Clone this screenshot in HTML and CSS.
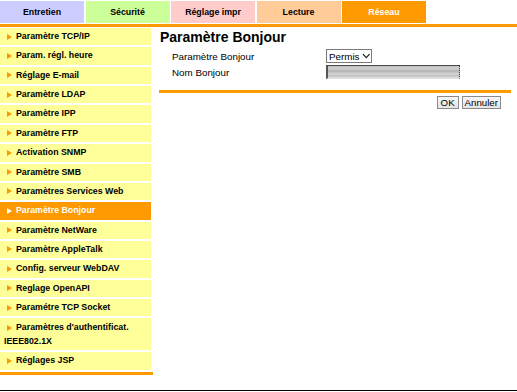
FILE: index.html
```html
<!DOCTYPE html>
<html lang="fr">
<head>
<meta charset="utf-8">
<title>Paramètre Bonjour</title>
<link rel="stylesheet" href="styles.css">
</head>
<body>
<div class="page">
  <nav class="tabs">
    <div class="tab tab-entretien">Entretien</div>
    <div class="tab tab-securite">Sécurité</div>
    <div class="tab tab-reglage">Réglage impr</div>
    <div class="tab tab-lecture">Lecture</div>
    <div class="tab tab-reseau">Réseau</div>
  </nav>
  <div class="tabs-line"></div>
  <div class="main">
    <aside class="sidebar">
      <ul class="menu">
        <li class="item"><span class="arrow"></span>Paramètre TCP/IP</li>
        <li class="item"><span class="arrow"></span>Param. régl. heure</li>
        <li class="item"><span class="arrow"></span>Réglage E-mail</li>
        <li class="item"><span class="arrow"></span>Paramètre LDAP</li>
        <li class="item"><span class="arrow"></span>Paramètre IPP</li>
        <li class="item"><span class="arrow"></span>Paramètre FTP</li>
        <li class="item"><span class="arrow"></span>Activation SNMP</li>
        <li class="item"><span class="arrow"></span>Paramètre SMB</li>
        <li class="item"><span class="arrow"></span>Paramètres Services Web</li>
        <li class="item active"><span class="arrow"></span>Paramètre Bonjour</li>
        <li class="item"><span class="arrow"></span>Paramètre NetWare</li>
        <li class="item"><span class="arrow"></span>Paramètre AppleTalk</li>
        <li class="item"><span class="arrow"></span>Config. serveur WebDAV</li>
        <li class="item"><span class="arrow"></span>Reglage OpenAPI</li>
        <li class="item"><span class="arrow"></span>Paramétre TCP Socket</li>
        <li class="item double"><span class="arrow"></span>Paramètres d'authentificat. IEEE802.1X</li>
        <li class="item"><span class="arrow"></span>Réglages JSP</li>
      </ul>
      <div class="sidebar-line"></div>
    </aside>
    <section class="content">
      <h1 class="title">Paramètre Bonjour</h1>
      <div class="form">
        <div class="row">
          <span class="label">Paramètre Bonjour</span>
          <span class="select">Permis<svg class="chev" width="9" height="6" viewBox="0 0 9 6"><path d="M1 1 L4.5 4.8 L8 1" fill="none" stroke="#222" stroke-width="1.3"/></svg></span>
        </div>
        <div class="row">
          <span class="label">Nom Bonjour</span>
          <span class="textbox"></span>
        </div>
      </div>
      <div class="content-line"></div>
      <div class="buttons">
        <button class="btn btn-ok">OK</button>
        <button class="btn">Annuler</button>
      </div>
    </section>
  </div>
  <div class="bottom-line"></div>
</div>
</body>
</html>
```

FILE: styles.css
```css
* { box-sizing: border-box; }
html, body { margin: 0; padding: 0; background: #fff; }
body {
  font-family: "Liberation Sans", Arial, sans-serif;
  color: #000;
}
.page {
  width: 517px;
  height: 392px;
  display: flex;
  flex-direction: column;
}
.tabs {
  display: flex;
  gap: 1.5px;
  margin-top: 1px;
  height: 22px;
}
.tab {
  width: 84px;
  display: flex;
  align-items: center;
  justify-content: center;
  font-weight: bold;
  font-size: 8.8px;
  color: #000;
}
.tab-entretien { background: #ccccff; }
.tab-securite { background: #ccff99; }
.tab-reglage { background: #ffcccc; }
.tab-lecture { background: #ffcc99; }
.tab-reseau { background: #ff9900; color: #fff; }
.tabs-line {
  height: 3px;
  margin-top: 1px;
  background: #ff9900;
}
.main {
  flex: 1;
  display: flex;
  margin-top: 1px;
}
.sidebar {
  width: 153px;
  display: flex;
  flex-direction: column;
}
.menu {
  list-style: none;
  margin: 0;
  padding: 0;
  width: 151px;
  display: flex;
  flex-direction: column;
  gap: 2px;
}
.item {
  background: #ffff99;
  font-weight: bold;
  font-size: 8.8px;
  line-height: 13.36px;
  padding: 2px 2px 2px 4px;
  white-space: nowrap;
}
.item.double {
  white-space: normal;
  line-height: 14px;
}
.arrow {
  display: inline-block;
  width: 0;
  height: 0;
  border-left: 5px solid #ff9900;
  border-top: 3.5px solid transparent;
  border-bottom: 3.5px solid transparent;
  margin-left: 3px;
  margin-right: 4px;
  vertical-align: -0.5px;
}
.item.active {
  background: #ff9900;
  color: #fff;
}
.item.active .arrow { border-left-color: #fff; }
.sidebar-line {
  height: 3px;
  margin-top: 2px;
  width: 153px;
  background: #ff9900;
}
.content {
  width: 352px;
  margin-left: 6px;
  display: flex;
  flex-direction: column;
}
.title {
  margin: 1px 0 0 1px;
  font-size: 14px;
  font-weight: bold;
  line-height: 17px;
}
.form {
  margin-top: 3px;
  padding-left: 13px;
  display: flex;
  flex-direction: column;
  gap: 2px;
}
.row {
  display: flex;
  align-items: center;
  height: 14px;
}
.label {
  width: 154px;
  font-size: 9.8px;
}
.select {
  display: inline-flex;
  align-items: center;
  height: 14px;
  width: 46px;
  border: 1px solid #7a7a7a;
  background: #fff;
  font-size: 9.8px;
  padding-left: 2px;
  gap: 3px;
}
.chev { display: block; }
.textbox {
  display: block;
  width: 134px;
  height: 14px;
  border-top: 1px solid #444;
  border-left: 2px solid #555;
  border-right: 1px dotted #333;
  border-bottom: 1px solid #ddd;
  background:
    linear-gradient(to bottom, #c4c4c4 0, #cfcfcf 3px, #b2b2b2 5px, #d6d6d6 8px, #bdbdbd 10px, #e8e8e8 12px, #fff 100%);
}
.content-line {
  margin-top: 11px;
  height: 3px;
  background: #ff9900;
}
.buttons {
  display: flex;
  justify-content: flex-end;
  gap: 3px;
  margin-top: 3px;
  padding-right: 10px;
}
.btn {
  font-family: "Liberation Sans", Arial, sans-serif;
  font-size: 9.7px;
  height: 13px;
  padding: 0 2px;
  line-height: 11px;
  border: 1px solid #8a8a8a;
  background: linear-gradient(#f6f6f6, #e4e4e4);
  color: #000;
  border-radius: 0;
}
.btn-ok { width: 22px; }
.bottom-line {
  height: 1px;
  background: #000;
  margin-bottom: 1px;
}
```
